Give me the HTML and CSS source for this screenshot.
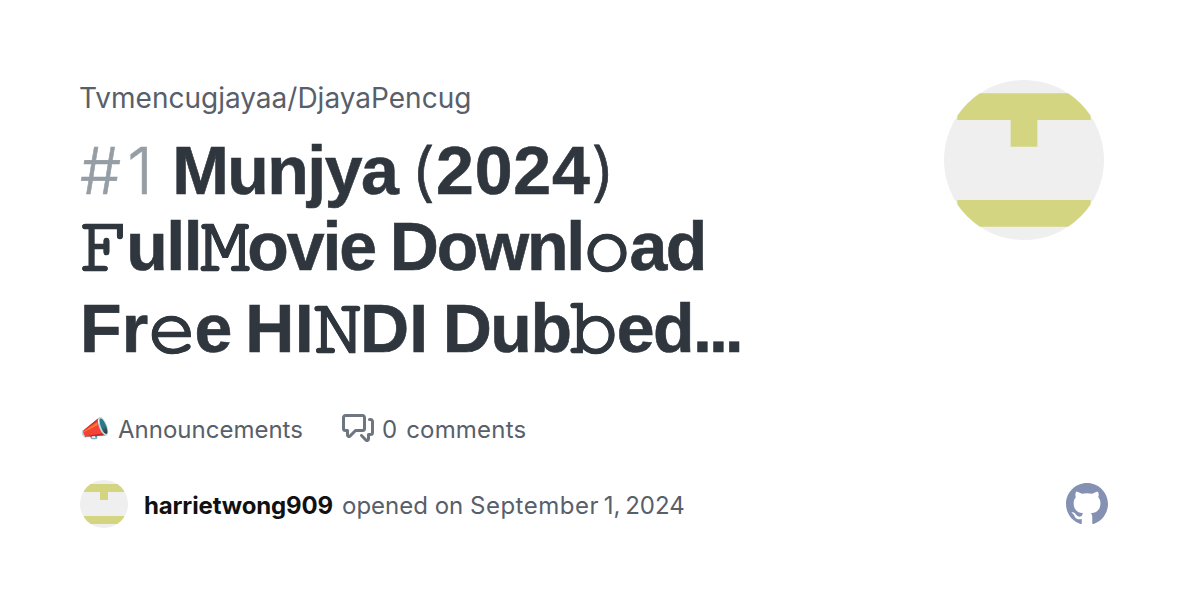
FILE: index.html
```
<!DOCTYPE html>
<html lang="en">
<head>
    <meta charset="UTF-8">
    <meta name="viewport" content="width=device-width, initial-scale=1.0">
    <title>Munjya (2024) · Tvmencugjayaa/DjayaPencug</title>
    <link rel="stylesheet" href="styles.css">
</head>
<body>
    <div class="card">
        <div class="top">
            <div class="heading">
                <div class="repo">Tvmencugjayaa/DjayaPencug</div>
                <h1>
                    <span class="line"><span class="number">#1</span> Munjya <span class="paren">(</span><span class="year">2024</span><span class="paren">)</span></span>
                    <span class="line"><span class="mono">𝙵</span>ull<span class="mono">𝙼</span><span class="tight">ovie Downl</span><span class="mono">𝚘</span>ad</span>
                    <span class="line"><span class="wide">Fr</span><span class="mono">𝚎</span>e <span class="wide">HI</span><span class="mono">𝙽</span><span class="wide">DI</span> Dub<span class="mono">𝚋</span>ed<span class="dots">...</span></span>
                </h1>
            </div>
            <svg class="avatar" viewBox="0 0 12 12">
                <rect width="12" height="12" fill="#efefef"/>
                <path d="M1 1h10v2H7v2H5V3H1zM1 9h10v2H1z" fill="#d3d581"/>
            </svg>
        </div>
        <div class="stats">
            <span class="emoji">📣</span>
            <span class="category">Announcements</span>
            <svg class="comments-icon" viewBox="0 0 16 16">
                <path d="M1.75 1h8.5c.966 0 1.75.784 1.75 1.75v5.5A1.75 1.75 0 0 1 10.25 10H7.061l-2.574 2.573A1.458 1.458 0 0 1 2 11.543V10h-.25A1.75 1.75 0 0 1 0 8.25v-5.5C0 1.784.784 1 1.75 1ZM1.5 2.75v5.5c0 .138.112.25.25.25h1a.75.75 0 0 1 .75.75v2.19l2.72-2.72a.749.749 0 0 1 .53-.22h3.5a.25.25 0 0 0 .25-.25v-5.5a.25.25 0 0 0-.25-.25h-8.5a.25.25 0 0 0-.25.25Zm13 2a.25.25 0 0 0-.25-.25h-.5a.75.75 0 0 1 0-1.5h.5c.966 0 1.75.784 1.75 1.75v5.5A1.75 1.75 0 0 1 14.25 12H14v1.543a1.458 1.458 0 0 1-2.487 1.03L9.22 12.28a.749.749 0 0 1 .326-1.275.749.749 0 0 1 .734.215l2.22 2.22v-2.19a.75.75 0 0 1 .75-.75h1a.25.25 0 0 0 .25-.25Z"/>
            </svg>
            <span class="count">0</span>
            <span class="label">comments</span>
        </div>
        <div class="footer">
            <svg class="avatar small" viewBox="0 0 12 12">
                <rect width="12" height="12" fill="#efefef"/>
                <path d="M1 1h10v2H7v2H5V3H1zM1 9h10v2H1z" fill="#d3d581"/>
            </svg>
            <b class="author">harrietwong909</b>
            <span class="opened">opened on <span class="month">September</span><span class="date"> 1, 2024</span></span>
            <svg class="github" viewBox="0 0 16 16">
                <path d="M8 0C3.58 0 0 3.58 0 8c0 3.54 2.29 6.53 5.47 7.59.4.07.55-.17.55-.38 0-.19-.01-.82-.01-1.49-2.01.37-2.53-.49-2.69-.94-.09-.23-.48-.94-.82-1.13-.28-.15-.68-.52-.01-.53.63-.01 1.08.58 1.23.82.72 1.21 1.87.87 2.33.66.07-.52.28-.87.51-1.07-1.78-.2-3.64-.89-3.64-3.95 0-.87.31-1.59.82-2.15-.08-.2-.36-1.02.08-2.12 0 0 .67-.21 2.2.82.64-.18 1.32-.27 2-.27.68 0 1.36.09 2 .27 1.53-1.04 2.2-.82 2.2-.82.44 1.1.16 1.92.08 2.12.51.56.82 1.27.82 2.15 0 3.07-1.87 3.75-3.65 3.95.29.25.54.73.54 1.48 0 1.07-.01 1.93-.01 2.2 0 .21.15.46.55.38A8.013 8.013 0 0 0 16 8c0-4.42-3.58-8-8-8z"/>
            </svg>
        </div>
    </div>
</body>
</html>
```
FILE: styles.css
```
body {
    margin: 0;
    background-color: #fff;
    font-family: Inter, "Liberation Sans", sans-serif;
    color: #57606a;
}
.card {
    box-sizing: border-box;
    width: 1200px;
    height: 600px;
    padding: 80px 92px 0 80px;
}
.top {
    display: flex;
    justify-content: space-between;
    height: 320px;
    padding-right: 4px;
}
.heading {
    margin-left: -1px;
}
.repo {
    font-size: 28px;
    line-height: 36px;
}
h1 {
    margin: 14px 0 0 1px;
    font-family: "Liberation Sans", sans-serif;
    font-size: 68px;
    font-weight: 700;
    color: #2f363d;
    letter-spacing: -1.5px;
    -webkit-text-stroke: 0.6px #2f363d;
}
.line {
    display: block;
    height: 76px;
    line-height: 80px;
    white-space: nowrap;
}
.line:nth-child(1) {
    word-spacing: -4px;
}
.line:nth-child(2) {
    height: 82px;
    word-spacing: -2px;
}
.line:nth-child(3) {
    word-spacing: -3px;
}
.number {
    font-family: Inter, sans-serif;
    font-size: 65px;
    font-weight: 300;
    line-height: 0;
    color: #959da5;
    letter-spacing: 6px;
    -webkit-text-stroke: 0.6px #959da5;
}
.paren {
    display: inline-block;
    margin: 0 1.5px;
    font-family: Inter, sans-serif;
    font-size: 64px;
    font-weight: 300;
    line-height: 0;
    letter-spacing: 0;
    transform: scaleX(1.15);
}
.year {
    letter-spacing: 0.8px;
}
.wide {
    letter-spacing: 0.2px;
}
.tight {
    letter-spacing: -2.1px;
}
.mono {
    font-size: 68px;
    line-height: 0;
    letter-spacing: -1.8px;
}
.dots {
    letter-spacing: -3px;
}
.avatar {
    flex: none;
    width: 160px;
    height: 160px;
    border-radius: 50%;
}
.stats {
    display: flex;
    align-items: center;
    height: 56px;
    font-size: 24px;
}
.emoji {
    width: 38px;
    font-size: 24px;
}
.category {
    width: 224px;
}
.category, .count, .label, .author, .opened {
    padding-top: 2px;
}
.comments-icon {
    width: 32px;
    height: 32px;
    margin-right: 8px;
    fill: #6e7781;
}
.label {
    margin-left: 9px;
    letter-spacing: 0.2px;
}
.footer {
    display: flex;
    align-items: center;
    height: 48px;
    margin-top: 24px;
    font-size: 24px;
}
.avatar.small {
    width: 48px;
    height: 48px;
    margin-right: 16px;
}
.author {
    margin-right: 9px;
    color: #111;
    letter-spacing: -0.15px;
}
.month {
    letter-spacing: 0.5px;
}
.date {
    word-spacing: -2px;
}
.github {
    width: 42px;
    height: 42px;
    margin-left: auto;
    fill: #8491b3;
}
```
